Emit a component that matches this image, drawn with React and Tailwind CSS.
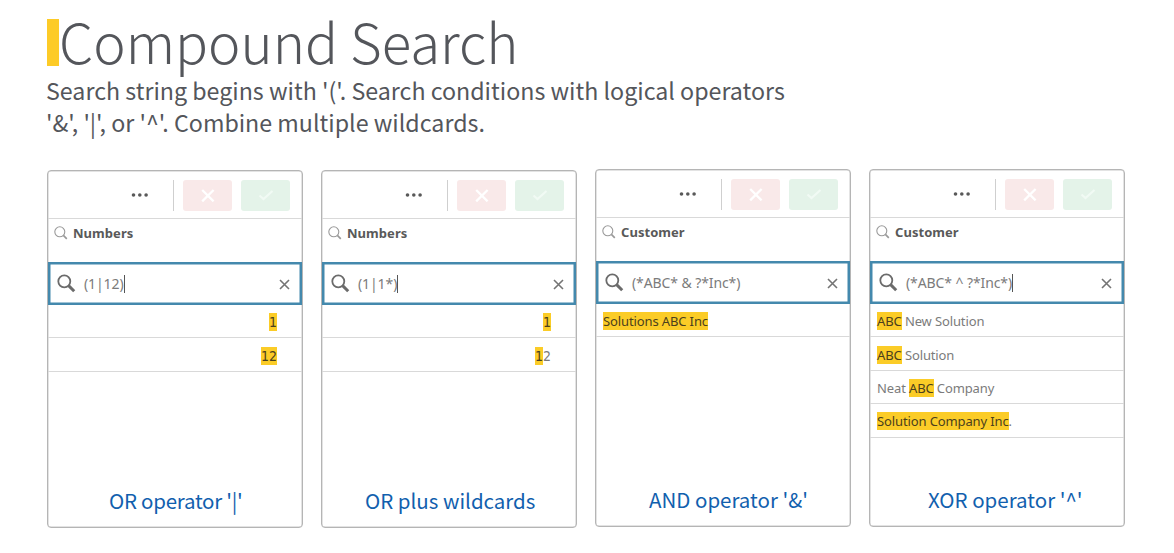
const HIT = "inline-block h-[18px] bg-[#fbcc27] text-[#4b3f1d]";

const panels = [
  {
    field: "Numbers",
    query: "(1|12)",
    querySpacing: "tracking-[-0.1px]",
    cursor: true,
    numeric: true,
    rows: [[{ text: "1", hit: true }], [{ text: "12", hit: true }]],
    caption: "OR operator '|'",
    captionStyle: "pl-[61px] tracking-[-0.25px]",
    offset: "mt-px",
  },
  {
    field: "Numbers",
    query: "(1|1*)",
    querySpacing: "tracking-[-0.1px]",
    cursor: true,
    numeric: true,
    rows: [
      [{ text: "1", hit: true }],
      [{ text: "1", hit: true }, { text: "2" }],
    ],
    caption: "OR plus wildcards",
    captionStyle: "pl-[43px]",
    offset: "mt-px",
  },
  {
    field: "Customer",
    query: "(*ABC* & ?*Inc*)",
    querySpacing: "tracking-[-0.1px]",
    rows: [[{ text: "Solutions ABC Inc", hit: true }]],
    caption: "AND operator '&'",
    captionStyle: "pl-[53px]",
    offset: "mb-px",
  },
  {
    field: "Customer",
    query: "(*ABC* ^ ?*Inc*)",
    querySpacing: "tracking-[-0.1px]",
    cursor: true,
    rows: [
      [{ text: "ABC", hit: true }, { text: " New Solution" }],
      [{ text: "ABC", hit: true }, { text: " Solution" }],
      [{ text: "Neat " }, { text: "ABC", hit: true }, { text: " Company" }],
      [{ text: "Solution Company Inc", hit: true }, { text: "." }],
    ],
    caption: "XOR operator '^'",
    captionStyle: "pl-[58px]",
    offset: "mb-px",
  },
];

const SmallSearch = () => (
  <svg width="14" height="14" viewBox="0 0 14 14" fill="none" stroke="#9a9a9a">
    <circle cx="5.8" cy="5.8" r="5" strokeWidth="1.1" />
    <path d="M9.4 9.4 12.8 12.8" strokeWidth="1.7" />
  </svg>
);

const LargeSearch = () => (
  <svg width="19" height="19" viewBox="0 0 19 19" fill="none" stroke="#6b6b6b">
    <circle cx="7.3" cy="7.3" r="6" strokeWidth="1.8" />
    <path d="M11.6 11.6 17.2 17.2" strokeWidth="3" />
  </svg>
);

const Toolbar = () => (
  <div className="flex h-[48px] shrink-0 items-center border-b border-[#d9d9d9] pt-px pl-[83px]">
    <svg width="18" height="6" viewBox="0 0 18 6" fill="#595959">
      <circle cx="2.5" cy="3" r="1.8" />
      <circle cx="8.8" cy="3" r="1.8" />
      <circle cx="15.1" cy="3" r="1.8" />
    </svg>
    <div className="ml-6 h-[31px] w-px bg-[#cfcfcf]" />
    <button className="ml-[9px] flex h-[31px] w-[49px] items-center justify-center rounded-[3px] bg-[#f9e9e9]">
      <svg width="14" height="14" viewBox="0 0 14 14" stroke="#fff" strokeWidth="2.3">
        <path d="M1.2 2 12.6 13.4M12.6 2 1.2 13.4" />
      </svg>
    </button>
    <button className="ml-[9px] flex h-[31px] w-[49px] items-center justify-center rounded-[3px] bg-[#e4f3e9]">
      <svg width="16" height="12" viewBox="0 0 16 12" fill="none" stroke="#f1faf4" strokeWidth="2.2">
        <path d="M1.5 6.5 5.5 10 14.5 2" />
      </svg>
    </button>
  </div>
);

const Panel = ({ panel }) => (
  <section
    className={`flex h-[358px] w-64 flex-col rounded-[4px] border border-[#b5b5b5] bg-white font-['Noto_Sans',sans-serif] shadow-[inset_0_0_0_0.5px_#c8c8c8] ${panel.offset}`}
  >
    <Toolbar />
    <div className="flex h-[43px] shrink-0 items-start gap-[5px] pt-[7px] pl-[6px]">
      <SmallSearch />
      <span className="text-[13px] leading-[14px] font-bold tracking-[0.05px] text-[#595959]">
        {panel.field}
      </span>
    </div>
    <div className="flex h-[43px] shrink-0 items-center border-2 border-[#4489ad] pr-[10px] pl-[7px] shadow-[inset_0_0_0_0.5px_#4489ad]">
      <LargeSearch />
      <span className={`ml-[8px] whitespace-pre text-[14px] leading-5 text-[#7b7b7b] ${panel.querySpacing}`}>
        {panel.query}
      </span>
      {panel.cursor && <span className="h-[18px] w-px bg-[#555]" />}
      <svg className="mt-[2px] ml-auto" width="11" height="11" viewBox="0 0 11 11" stroke="#747474" strokeWidth="1.6">
        <path d="M1 1 10 10M10 1 1 10" />
      </svg>
    </div>
    {panel.rows.map((row, i) => (
      <div
        key={i}
        className={`flex h-[33.4px] shrink-0 items-center border-b border-[#d9d9d9] pt-[2px] whitespace-pre text-[#7b7b7b] ${
          panel.numeric
            ? "justify-end pr-[25px] font-['DejaVu_Sans_Condensed','DejaVu_Sans',sans-serif] text-[14px] leading-[18px]"
            : "pl-[7px] text-[13px] leading-[18px] tracking-[-0.12px]"
        }`}
      >
        {row.map((part, j) => (
          <span key={j} className={part.hit ? HIT : ""}>
            {part.text}
          </span>
        ))}
      </div>
    ))}
    <p
      className={`mt-auto mb-[11px] whitespace-nowrap font-['Noto_Sans_CJK_SC',sans-serif] text-[20.5px] leading-8 text-[#1160ae] ${panel.captionStyle}`}
    >
      {panel.caption}
    </p>
  </section>
);

const App = () => {
  return (
    <main className="h-[553px] w-[1174px] overflow-hidden bg-white pt-[19px] pl-[47px] font-['Noto_Sans_CJK_SC',sans-serif] text-[#54565b]">
      <header className="h-[150px]">
        <div className="flex h-[47px] items-start">
          <div className="h-[47px] w-3 bg-[#fdcb27]" />
          <h1 className="-mt-[2px] text-[54.6px] leading-[47px] font-extralight whitespace-nowrap">Compound Search</h1>
        </div>
        <p className="-ml-px pt-2 text-[23.23px] leading-8 whitespace-nowrap">
          Search string begins with '('. Search conditions with logical operators
          <br />
          '&', '|', or '^'. Combine multiple wildcards.
        </p>
      </header>
      <div className="flex gap-[18px]">
        {panels.map((panel, i) => (
          <Panel key={i} panel={panel} />
        ))}
      </div>
    </main>
  );
};

export default App;
